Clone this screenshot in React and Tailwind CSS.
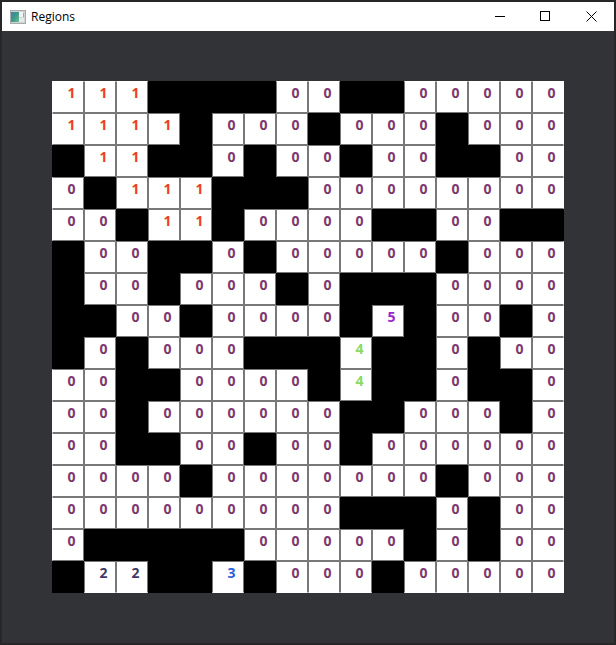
const ROWS = [
  '111####00##00000',
  '1111#000#000#000',
  '#11##0#00#00##00',
  '0#111###00000000',
  '00#11#0000##00##',
  '#00##0#00000#000',
  '#00#000#0###0000',
  '##00#0000#5#00#0',
  '#0#000###4##0#00',
  '00##0000#4##0##0',
  '00#000000##000#0',
  '00##00#00#000000',
  '0000#0000000#000',
  '000000000###0#00',
  '0#####00000#0#00',
  '#22##3#000#00000',
];

const COLORS = {
  0: 'text-[#7d3670]',
  1: 'text-[#ea4022]',
  2: 'text-[#433868]',
  3: 'text-[#2c60da]',
  4: 'text-[#8bd962]',
  5: 'text-[#9a28cc]',
};

function WindowIcon() {
  return (
    <svg width="16" height="14" viewBox="0 0 16 14" aria-hidden="true" shapeRendering="crispEdges">
      <defs>
        <linearGradient id="pane" x1="0" y1="0" x2="1" y2="1">
          <stop offset="0" stopColor="#3f7fa8" />
          <stop offset="0.5" stopColor="#3f9a86" />
          <stop offset="1" stopColor="#6cc09a" />
        </linearGradient>
      </defs>
      <rect width="16" height="14" fill="#a6abab" />
      <rect x="1" y="1" width="14" height="12" fill="#cfd3d3" />
      <rect x="1" y="2" width="8" height="10" fill="url(#pane)" />
      <rect x="9" y="2" width="4" height="5" fill="#f2f4f4" />
      <rect x="13" y="3" width="1" height="4" fill="#8fb3a8" />
      <rect x="9" y="8" width="5" height="4" fill="#e6e9e9" />
    </svg>
  );
}

function ControlButton({ label, children }) {
  return (
    <button type="button" aria-label={label} className="flex h-full w-[46px] items-center justify-center pb-px">
      <svg width="11" height="11" viewBox="0 0 11 11" fill="none" stroke="#000" aria-hidden="true">
        {children}
      </svg>
    </button>
  );
}

function TitleBar() {
  return (
    <header className="flex h-[29px] items-center bg-white pl-2">
      <WindowIcon />
      <h1 className="ml-[5px] text-[12px] leading-4 font-normal text-black">Regions</h1>
      <div className="ml-auto flex h-full">
        <ControlButton label="Minimize">
          <path d="M1 5.5H11" />
        </ControlButton>
        <ControlButton label="Maximize">
          <rect x="0.5" y="0.5" width="9" height="9" />
        </ControlButton>
        <ControlButton label="Close">
          <path d="M0.5 0.5L10.5 10.5M10.5 0.5L0.5 10.5" />
        </ControlButton>
      </div>
    </header>
  );
}

function Cell({ value }) {
  if (value === '#') return <div className="border-black bg-black" />;
  return (
    <div
      className={`border-[#787878] bg-white pt-px pl-[7px] text-center text-[14px] font-bold leading-5 ${COLORS[value]}`}
    >
      {value}
    </div>
  );
}

export default function App() {
  return (
    <div className="flex min-h-screen flex-col border-2 border-[#272727] bg-[#323337] font-['Open_Sans','Noto_Sans',sans-serif]">
      <TitleBar />
      <main className="flex flex-1 items-start justify-center py-[50px]">
        <div className="bg-black">
          {ROWS.map((row, y) => (
            <div
              key={y}
              className="grid auto-cols-[32px] grid-flow-col grid-rows-[32px] *:border first:*:not-[.bg-black]:border-t-white last:*:not-[.bg-black]:border-b-white [&>.bg-white:first-child]:border-l-white [&>.bg-white:last-child]:border-r-white"
            >
              {row.split('').map((value, x) => (
                <Cell key={x} value={value} />
              ))}
            </div>
          ))}
        </div>
      </main>
    </div>
  );
}
